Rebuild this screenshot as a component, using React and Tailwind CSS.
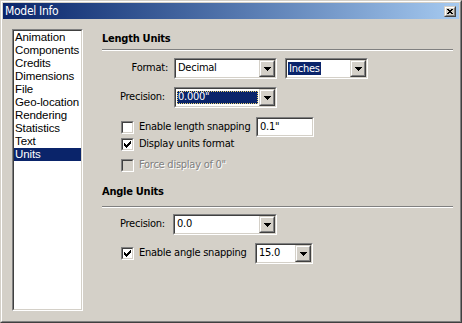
import React from 'react';

const items = ['Animation', 'Components', 'Credits', 'Dimensions', 'File', 'Geo-location', 'Rendering', 'Statistics', 'Text', 'Units'];

const font = "font-['DejaVu_Sans_Condensed','DejaVu_Sans',sans-serif]";

const Sunken = ({ className = '', inner = '', children }) => (
  <div className={`border border-t-[#808080] border-l-[#808080] border-r-white border-b-white ${className}`}>
    <div className={`h-full border border-t-[#404040] border-l-[#404040] border-r-[#d4d0c8] border-b-[#d4d0c8] ${inner}`}>
      {children}
    </div>
  </div>
);

const Raised = ({ className = '', children }) => (
  <div className={`border border-t-[#d4d0c8] border-l-[#d4d0c8] border-r-[#404040] border-b-[#404040] ${className}`}>
    <div className="h-full flex items-center justify-center border border-t-white border-l-white border-r-[#808080] border-b-[#808080] bg-[#d4d0c8]">
      {children}
    </div>
  </div>
);

const Arrow = () => (
  <svg width="7" height="4" viewBox="0 0 7 4" shapeRendering="crispEdges">
    <path d="M0 0h7v1H0zM1 1h5v1H1zM2 2h3v1H2zM3 3h1v1H3z" fill="#000" />
  </svg>
);

const Check = ({ color = '#000' }) => (
  <svg width="7" height="7" viewBox="0 0 7 7" shapeRendering="crispEdges">
    <path d="M0 2h1v3H0zM1 3h1v3H1zM2 4h1v3H2zM3 3h1v3H3zM4 2h1v3H4zM5 1h1v3H5zM6 0h1v3H6z" fill={color} />
  </svg>
);

const Combo = ({ width, value, mode }) => (
  <Sunken className={`h-[21px] shrink-0 ${width}`} inner="bg-white flex">
    <div className="flex-1 flex items-center pl-[1px] pr-[1px]">
      {mode === 'full' ? (
        <div className="flex-1 h-[13px] flex items-center bg-[#0a246a] text-white outline outline-1 outline-dotted outline-[#e8d070] -outline-offset-1 pl-[1px]">
          {value}
        </div>
      ) : mode === 'text' ? (
        <span className="bg-[#0a246a] text-white px-[1px] leading-[13px]">{value}</span>
      ) : (
        <span className="pl-[1px]">{value}</span>
      )}
    </div>
    <Raised className="w-[16px] h-[17px]">
      <Arrow />
    </Raised>
  </Sunken>
);

const CheckBox = ({ checked, disabled }) => (
  <Sunken className="w-[13px] h-[13px] shrink-0" inner={`${disabled ? 'bg-[#d4d0c8]' : 'bg-white'} flex items-center justify-center`}>
    {checked && <Check />}
  </Sunken>
);

const Heading = ({ children, className = '' }) => (
  <div className={className}>
    <div className="h-[13px] leading-[13px] font-bold">{children}</div>
  </div>
);

const Rule = ({ className = '' }) => (
  <div className={`h-[2px] border-t border-t-[#808080] border-b border-b-white ${className}`} />
);

export default function App() {
  return (
    <div className={`w-[462px] h-[323px] bg-[#d4d0c8] text-[11px] tracking-[-0.25px] text-black border border-t-[#d4d0c8] border-l-[#d4d0c8] border-r-[#404040] border-b-[#404040] ${font}`}>
      <div className="h-full flex flex-col p-px border border-t-white border-l-white border-r-[#808080] border-b-[#808080]">
        <div className="h-[16px] shrink-0 flex items-center justify-between pl-[2px] pr-[3px] bg-gradient-to-r from-[#0a246a] to-[#a6caf0]">
          <span className="text-white text-[12px] tracking-[-0.3px] leading-[16px]">Model Info</span>
          <Raised className="w-[12px] h-[11px]">
            <svg width="6" height="5" viewBox="0 0 6 5" shapeRendering="crispEdges">
              <path d="M0 0h2v1H0zM4 0h2v1H4zM1 1h2v1H1zM3 1h2v1H3zM2 2h2v1H2zM1 3h2v1H1zM3 3h2v1H3zM0 4h2v1H0zM4 4h2v1H4z" fill="#000" />
            </svg>
          </Raised>
        </div>

        <div className="flex flex-1 pt-[10px] pl-[9px]">
          <Sunken className="w-[71px] h-[282px] shrink-0" inner="bg-white font-['Liberation_Sans',Arial,sans-serif] text-[11.5px] tracking-[-0.1px]">
            {items.map((item) => (
              <div
                key={item}
                className={`h-[13px] leading-[13px] pl-[1px] whitespace-nowrap ${item === 'Units' ? 'bg-[#0a246a] text-white' : ''}`}
              >
                {item}
              </div>
            ))}
          </Sunken>

          <div className="flex-1 ml-[19px] mr-[6px] -mt-[10px] flex flex-col">
            <Heading className="mt-[13px]">Length Units</Heading>
            <Rule className="mt-[4px]" />

            <div className="mt-[7px] flex items-center">
              <div className="w-[72px] text-right pr-[6px]">Format:</div>
              <Combo width="w-[103px]" value="Decimal" />
              <div className="w-[8px]" />
              <Combo width="w-[83px]" value="Inches" mode="text" />
            </div>

            <div className="mt-[8px] flex items-center">
              <div className="w-[72px] pl-[18px]">Precision:</div>
              <Combo width="w-[103px]" value={'0.000"'} mode="full" />
            </div>

            <div className="mt-[9px] h-[20px] flex items-center pl-[19px]">
              <CheckBox />
              <span className="w-[122px] pl-[5px] whitespace-nowrap">Enable length snapping</span>
              <Sunken className="w-[58px] h-[20px]" inner="bg-white flex items-center pl-[2px]">
                0.1"
              </Sunken>
            </div>

            <div className="mt-[1px] h-[13px] flex items-center pl-[19px]">
              <CheckBox checked />
              <span className="pl-[5px] whitespace-nowrap">Display units format</span>
            </div>

            <div className="mt-[8px] h-[13px] flex items-center pl-[19px]">
              <CheckBox disabled />
              <span className="pl-[5px] whitespace-nowrap text-[#808080] [text-shadow:1px_1px_0_#fff]">Force display of 0"</span>
            </div>

            <Heading className="mt-[13px]">Angle Units</Heading>
            <Rule className="mt-[8px]" />

            <div className="mt-[6px] flex items-center">
              <div className="w-[71px] pl-[18px]">Precision:</div>
              <Combo width="w-[104px]" value="0.0" />
            </div>

            <div className="mt-[8px] h-[21px] flex items-center pl-[19px]">
              <CheckBox checked />
              <span className="w-[121px] pl-[5px] whitespace-nowrap">Enable angle snapping</span>
              <Combo width="w-[58px]" value="15.0" />
            </div>
          </div>
        </div>
      </div>
    </div>
  );
}
